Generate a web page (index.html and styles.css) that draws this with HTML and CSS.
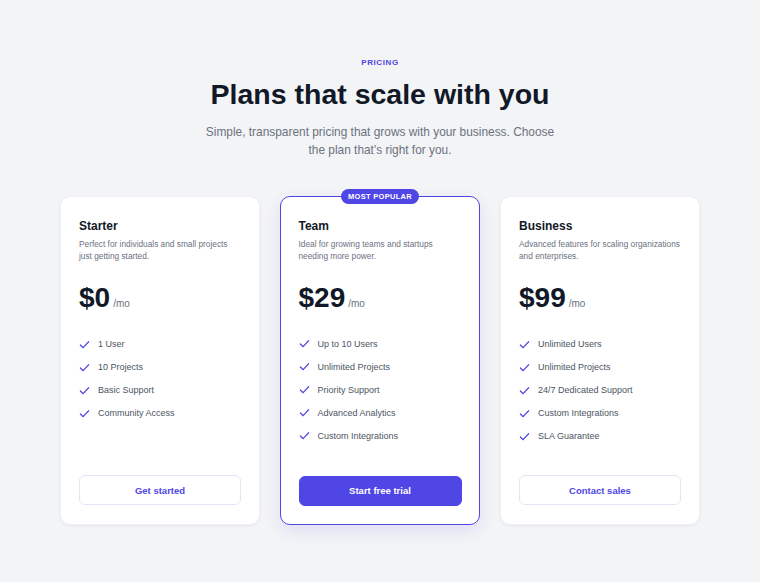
FILE: index.html
```html
<!DOCTYPE html>
<html lang="en">

<head>
    <meta charset="UTF-8">
    <meta name="viewport" content="width=device-width, initial-scale=1.0">
    <title>Pricing</title>
    <link rel="stylesheet" href="styles.css">
</head>

<body>
    <section class="pricing">
        <p class="eyebrow">Pricing</p>
        <h1>Plans that scale with you</h1>
        <p class="lead">Simple, transparent pricing that grows with your business. Choose the plan that's right for you.</p>

        <div class="plans">
            <div class="plan">
                <h3>Starter</h3>
                <p class="desc">Perfect for individuals and small projects just getting started.</p>
                <p class="price">$0<span>/mo</span></p>
                <ul class="features">
                    <li><svg viewBox="0 0 12 12"><path d="M1.5 6.5l3 3 6-6.5"/></svg>1 User</li>
                    <li><svg viewBox="0 0 12 12"><path d="M1.5 6.5l3 3 6-6.5"/></svg>10 Projects</li>
                    <li><svg viewBox="0 0 12 12"><path d="M1.5 6.5l3 3 6-6.5"/></svg>Basic Support</li>
                    <li><svg viewBox="0 0 12 12"><path d="M1.5 6.5l3 3 6-6.5"/></svg>Community Access</li>
                </ul>
                <button class="btn">Get started</button>
            </div>

            <div class="plan featured">
                <span class="badge">Most Popular</span>
                <h3>Team</h3>
                <p class="desc">Ideal for growing teams and startups needing more power.</p>
                <p class="price">$29<span>/mo</span></p>
                <ul class="features">
                    <li><svg viewBox="0 0 12 12"><path d="M1.5 6.5l3 3 6-6.5"/></svg>Up to 10 Users</li>
                    <li><svg viewBox="0 0 12 12"><path d="M1.5 6.5l3 3 6-6.5"/></svg>Unlimited Projects</li>
                    <li><svg viewBox="0 0 12 12"><path d="M1.5 6.5l3 3 6-6.5"/></svg>Priority Support</li>
                    <li><svg viewBox="0 0 12 12"><path d="M1.5 6.5l3 3 6-6.5"/></svg>Advanced Analytics</li>
                    <li><svg viewBox="0 0 12 12"><path d="M1.5 6.5l3 3 6-6.5"/></svg>Custom Integrations</li>
                </ul>
                <button class="btn primary">Start free trial</button>
            </div>

            <div class="plan">
                <h3>Business</h3>
                <p class="desc">Advanced features for scaling organizations and enterprises.</p>
                <p class="price">$99<span>/mo</span></p>
                <ul class="features">
                    <li><svg viewBox="0 0 12 12"><path d="M1.5 6.5l3 3 6-6.5"/></svg>Unlimited Users</li>
                    <li><svg viewBox="0 0 12 12"><path d="M1.5 6.5l3 3 6-6.5"/></svg>Unlimited Projects</li>
                    <li><svg viewBox="0 0 12 12"><path d="M1.5 6.5l3 3 6-6.5"/></svg>24/7 Dedicated Support</li>
                    <li><svg viewBox="0 0 12 12"><path d="M1.5 6.5l3 3 6-6.5"/></svg>Custom Integrations</li>
                    <li><svg viewBox="0 0 12 12"><path d="M1.5 6.5l3 3 6-6.5"/></svg>SLA Guarantee</li>
                </ul>
                <button class="btn">Contact sales</button>
            </div>
        </div>
    </section>
</body>

</html>
```

FILE: styles.css
```css
* {
    box-sizing: border-box;
}

body {
    margin: 0;
    background-color: #f3f4f6;
    font-family: "Liberation Sans", Arial, sans-serif;
    color: #111827;
}

.pricing {
    padding: 57px 60px 40px;
    text-align: center;
}

.eyebrow {
    margin: 0;
    font-size: 8px;
    line-height: 12px;
    font-weight: bold;
    letter-spacing: 0.6px;
    text-transform: uppercase;
    color: #4f46e5;
}

h1 {
    margin: 7px 0 0;
    font-size: 28.5px;
    line-height: 36px;
    font-weight: bold;
    color: #111827;
}

.lead {
    max-width: 360px;
    margin: 11px auto 0;
    font-size: 11.9px;
    line-height: 18px;
    color: #6b7280;
}

.plans {
    display: grid;
    grid-template-columns: repeat(3, 1fr);
    gap: 20px;
    margin-top: 37px;
    text-align: left;
}

.plan {
    position: relative;
    display: flex;
    flex-direction: column;
    padding: 21px 18px 19px;
    background-color: #fff;
    border: 1px solid #eef0f3;
    border-radius: 10px;
    box-shadow: 0 1px 3px rgba(17, 24, 39, 0.06);
}

/* highlighted middle plan */
.plan.featured {
    border: 1.5px solid #4f46e5;
    padding: 20.5px 17.5px 18.5px;
    box-shadow: 0 6px 16px rgba(79, 70, 229, 0.12);
}

.badge {
    position: absolute;
    top: -8px;
    left: 50%;
    transform: translateX(-50%);
    padding: 0 7px;
    height: 15px;
    line-height: 15px;
    border-radius: 8px;
    background-color: #4f46e5;
    color: #fff;
    font-size: 7.5px;
    font-weight: bold;
    letter-spacing: 0.3px;
    text-transform: uppercase;
    white-space: nowrap;
}

h3 {
    margin: 0;
    font-size: 12px;
    line-height: 16px;
    font-weight: bold;
}

.desc {
    margin: 4px 0 0;
    font-size: 8.3px;
    line-height: 12px;
    color: #6b7280;
}

.price {
    margin: 20px 0 0;
    font-size: 28px;
    line-height: 32px;
    font-weight: bold;
}

.price span {
    margin-left: 3px;
    font-size: 10px;
    font-weight: normal;
    color: #6b7280;
}

.features {
    list-style: none;
    margin: 17px 0 32px;
    padding: 0;
    display: flex;
    flex-direction: column;
    gap: 9px;
}

.features li {
    display: flex;
    align-items: center;
    gap: 8px;
    font-size: 9px;
    line-height: 14px;
    color: #4b5563;
}

.features svg {
    width: 11px;
    height: 11px;
    fill: none;
    stroke: #4f46e5;
    stroke-width: 1.3;
    stroke-linecap: round;
    stroke-linejoin: round;
    flex-shrink: 0;
}

.btn {
    margin-top: auto;
    height: 30px;
    width: 100%;
    border: 1px solid #e3e5f4;
    border-radius: 6px;
    background-color: #fff;
    color: #4f46e5;
    font-family: inherit;
    font-size: 9.5px;
    font-weight: bold;
    cursor: pointer;
}

.btn.primary {
    background-color: #4f46e5;
    border-color: #4f46e5;
    color: #fff;
}
```
